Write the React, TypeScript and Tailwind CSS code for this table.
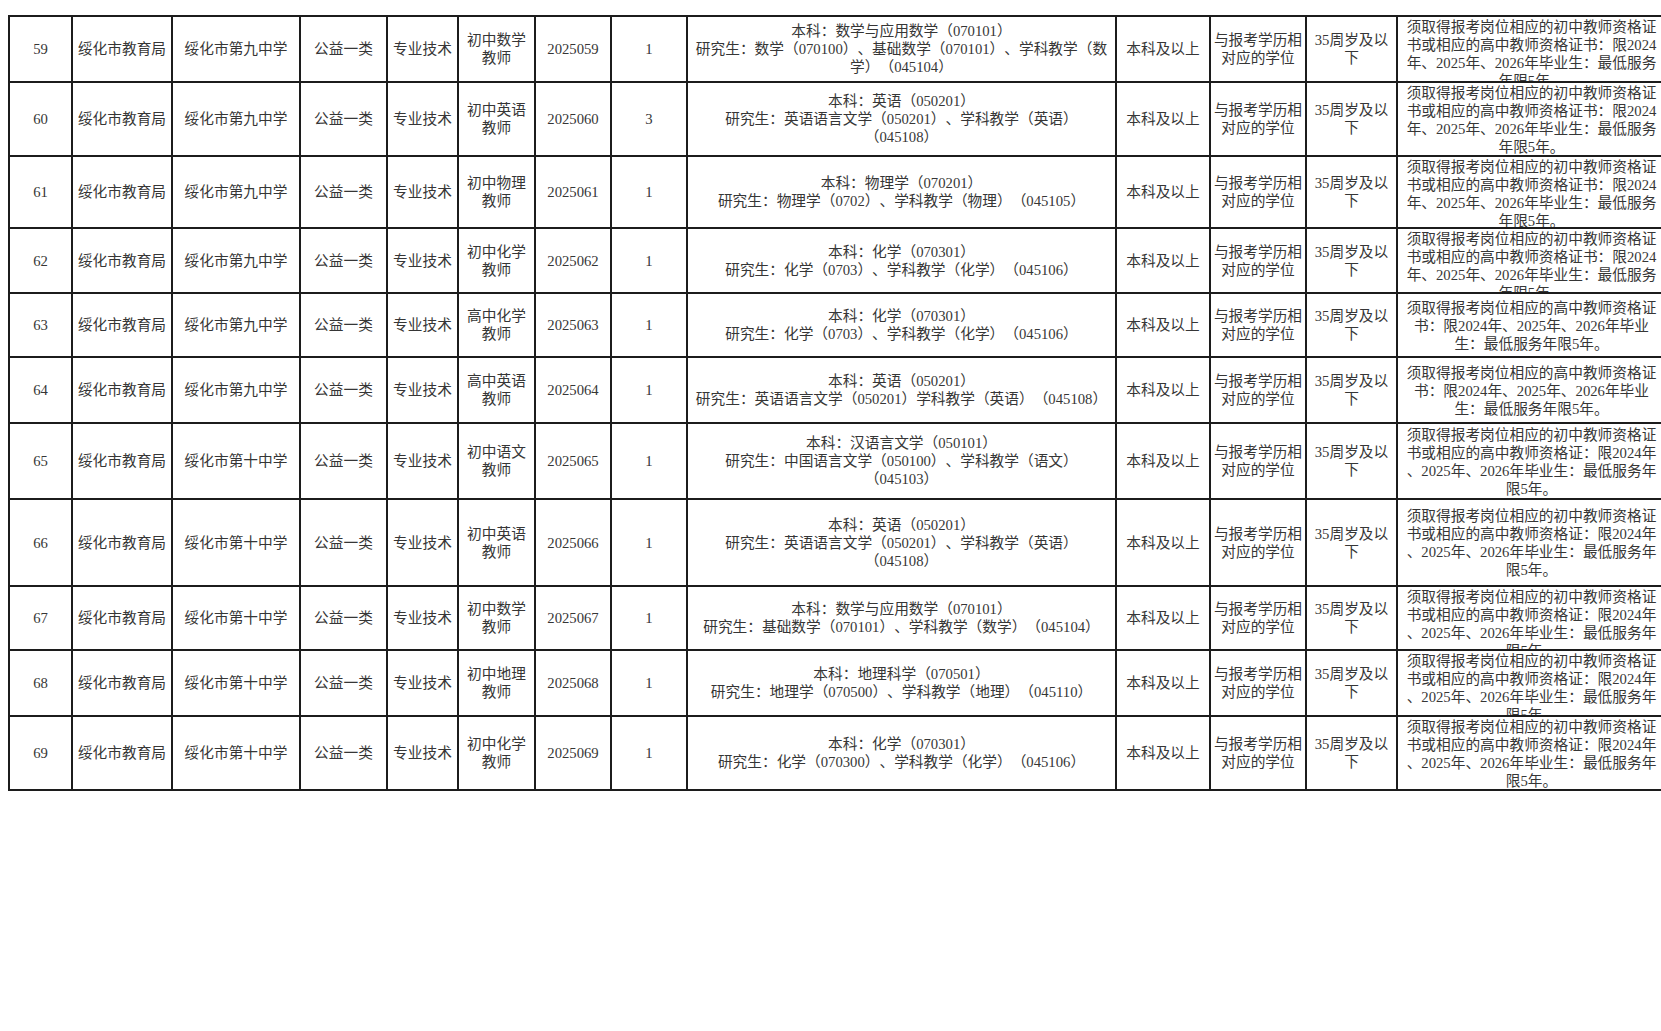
type Row = {
  no: number
  school: string
  post: string
  code: string
  count: number
  major: string[]
  note: string[]
}

const NOTE_A = ['须取得报考岗位相应的初中教师资格证', '书或相应的高中教师资格证书：限2024', '年、2025年、2026年毕业生：最低服务', '年限5年。']
const NOTE_B = ['须取得报考岗位相应的高中教师资格证', '书：限2024年、2025年、2026年毕业', '生：最低服务年限5年。']
const NOTE_C = ['须取得报考岗位相应的初中教师资格证', '书或相应的高中教师资格证：限2024年', '、2025年、2026年毕业生：最低服务年', '限5年。']

const NINE = '绥化市第九中学'
const TEN = '绥化市第十中学'

const rows: Row[] = [
  {
    no: 59, school: NINE, post: '初中数学', code: '2025059', count: 1,
    major: ['本科：数学与应用数学（070101）', '研究生：数学（070100）、基础数学（070101）、学科教学（数', '学）（045104）'],
    note: NOTE_A,
  },
  {
    no: 60, school: NINE, post: '初中英语', code: '2025060', count: 3,
    major: ['本科：英语（050201）', '研究生：英语语言文学（050201）、学科教学（英语）', '（045108）'],
    note: NOTE_A,
  },
  {
    no: 61, school: NINE, post: '初中物理', code: '2025061', count: 1,
    major: ['本科：物理学（070201）', '研究生：物理学（0702）、学科教学（物理）（045105）'],
    note: NOTE_A,
  },
  {
    no: 62, school: NINE, post: '初中化学', code: '2025062', count: 1,
    major: ['本科：化学（070301）', '研究生：化学（0703）、学科教学（化学）（045106）'],
    note: NOTE_A,
  },
  {
    no: 63, school: NINE, post: '高中化学', code: '2025063', count: 1,
    major: ['本科：化学（070301）', '研究生：化学（0703）、学科教学（化学）（045106）'],
    note: NOTE_B,
  },
  {
    no: 64, school: NINE, post: '高中英语', code: '2025064', count: 1,
    major: ['本科：英语（050201）', '研究生：英语语言文学（050201）学科教学（英语）（045108）'],
    note: NOTE_B,
  },
  {
    no: 65, school: TEN, post: '初中语文', code: '2025065', count: 1,
    major: ['本科：汉语言文学（050101）', '研究生：中国语言文学（050100）、学科教学（语文）', '（045103）'],
    note: NOTE_C,
  },
  {
    no: 66, school: TEN, post: '初中英语', code: '2025066', count: 1,
    major: ['本科：英语（050201）', '研究生：英语语言文学（050201）、学科教学（英语）', '（045108）'],
    note: NOTE_C,
  },
  {
    no: 67, school: TEN, post: '初中数学', code: '2025067', count: 1,
    major: ['本科：数学与应用数学（070101）', '研究生：基础数学（070101）、学科教学（数学）（045104）'],
    note: NOTE_C,
  },
  {
    no: 68, school: TEN, post: '初中地理', code: '2025068', count: 1,
    major: ['本科：地理科学（070501）', '研究生：地理学（070500）、学科教学（地理）（045110）'],
    note: NOTE_C,
  },
  {
    no: 69, school: TEN, post: '初中化学', code: '2025069', count: 1,
    major: ['本科：化学（070301）', '研究生：化学（070300）、学科教学（化学）（045106）'],
    note: NOTE_C,
  },
]

// cells clip what does not fit, like the printed sheet does
const cell =
  'border-r-2 border-b-2 border-[#1c1c1c] flex flex-col items-center [justify-content:safe_center] text-center overflow-hidden'

function Lines({ lines }: { lines: string[] }) {
  return (
    <>
      {lines.map((l, i) => (
        <div key={i} className="whitespace-nowrap">
          {l}
        </div>
      ))}
    </>
  )
}

export default function App() {
  return (
    <div
      className="w-full h-screen overflow-hidden bg-white text-[#363636] text-[14.7px] leading-[18px] [text-spacing-trim:space-all]"
      style={{ fontFamily: '"Liberation Serif", "Noto Sans CJK SC", serif' }}
    >
      <div className="ml-[8px] mt-[15px] w-[1659px] grid grid-cols-[63px_100px_128px_87px_71px_77px_76px_76px_429px_94px_96px_91px_269px] grid-rows-[66px_74px_72px_65px_64px_66px_76px_87px_64px_66px_74px] border-t-2 border-l-2 border-[#1c1c1c]">
        {rows.map((r) => (
          <div key={r.no} className="contents">
            <div className={cell}>{r.no}</div>
            <div className={cell}>绥化市教育局</div>
            <div className={cell}>{r.school}</div>
            <div className={cell}>公益一类</div>
            <div className={cell}>专业技术</div>
            <div className={cell}>
              <Lines lines={[r.post, '教师']} />
            </div>
            <div className={cell}>{r.code}</div>
            <div className={cell}>{r.count}</div>
            <div className={cell}>
              <Lines lines={r.major} />
            </div>
            <div className={cell}>本科及以上</div>
            <div className={cell}>
              <Lines lines={['与报考学历相', '对应的学位']} />
            </div>
            <div className={cell}>
              <Lines lines={['35周岁及以', '下']} />
            </div>
            <div className={`${cell} pt-[1px]`}>
              <Lines lines={r.note} />
            </div>
          </div>
        ))}
      </div>
    </div>
  )
}
